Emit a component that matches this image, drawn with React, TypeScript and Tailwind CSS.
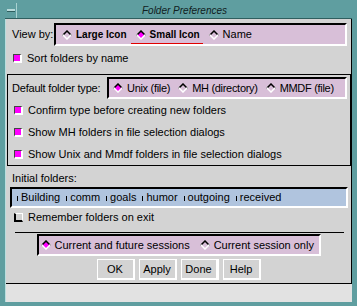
import React from "react";

type Opt = { label: string; bold?: boolean };

function Diamond({ on }: { on: boolean }) {
  return (
    <svg width="10" height="10" viewBox="0 0 10 10" className="shrink-0">
      <polygon points="5,1 9,5 5,9 1,5" fill={on ? "#ff00ff" : "none"} />
      <path d="M1 5 L5 1 L9 5" stroke="#000" strokeWidth="1.5" fill="none" strokeLinecap="square" />
      <path d="M1 5 L5 9 L9 5" stroke="#fff" strokeWidth="1.5" fill="none" strokeLinecap="square" />
    </svg>
  );
}

function Check({ on }: { on: boolean }) {
  if (on)
    return (
      <span className="block w-[9px] h-[9px] shrink-0 bg-[#ff00ff] border-t border-l border-[#444] border-r-2 border-b-2 border-r-white border-b-white" />
    );
  return (
    <span className="block w-[9px] h-[9px] shrink-0 bg-[#d3d3d3] border-l-2 border-b-2 border-black border-t border-r border-t-white border-r-white" />
  );
}

function RadioBox({
  options,
  selected,
  focus,
  pl,
  gap,
  className,
}: {
  options: Opt[];
  selected: number;
  focus?: number;
  pl: string;
  gap: string;
  className: string;
}) {
  return (
    <div
      className={`flex items-center bg-[#d8bfd8] border-t-2 border-l-2 border-black border-b-2 border-r-2 border-b-white border-r-white ${pl} ${gap} ${className}`}
    >
      {options.map((o, i) => (
        <span key={o.label} className="relative flex items-center gap-[4px]">
          <Diamond on={i === selected} />
          <span className={o.bold ? "font-bold text-[10px]" : ""}>{o.label}</span>
          {focus === i && (
            <span className="absolute left-[-5px] right-[-3px] top-[13px] h-[1px] bg-[#e00000]" />
          )}
        </span>
      ))}
    </div>
  );
}

function CheckRow({ on, label, className }: { on: boolean; label: string; className: string }) {
  return (
    <div className={`flex items-center gap-[5px] ${className}`}>
      <Check on={on} />
      <span>{label}</span>
    </div>
  );
}

const folders = ["Building", "comm", "goals", "humor", "outgoing", "received"];

export default function App() {
  return (
    <div className="w-[357px] h-[306px] bg-[#5f9ea0] flex flex-col pt-[3px] px-[5px] pb-[4px] text-black text-[11px] leading-none whitespace-nowrap font-['Liberation_Sans',Arial,sans-serif]">
      <div className="h-[16px] flex border-b border-[#2f5f5f]">
        <div className="w-[12px] border-r border-[#a9d2d2] flex items-center justify-center">
          <span className="block w-[8px] h-[3px] bg-[#b8dada] border-b border-[#2f5f5f]" />
        </div>
        <div className="flex-1 flex items-center justify-center italic text-[10px] text-[#102020]">
          Folder Preferences
        </div>
      </div>

      <div className="flex-1 flex flex-col bg-[#e2e2e2] border-l border-[#b8dede]">
        <div className="h-[265px] flex flex-col bg-[#d3d3d3] border-r border-b border-black">
          <div className="flex items-center h-[23px] mt-[4px] pl-[6px] pr-[4px]">
            <span className="w-[42px]">View by:</span>
            <RadioBox
              className="flex-1 h-[23px]"
              pl="pl-[6px]"
              gap="gap-[9px]"
              selected={1}
              focus={1}
              options={[
                { label: "Large Icon", bold: true },
                { label: "Small Icon", bold: true },
                { label: "Name" },
              ]}
            />
          </div>

          <CheckRow on className="h-[13px] mt-[6px] pl-[7px]" label="Sort folders by name" />

          <div className="mt-[9px] ml-[1px] border border-black flex flex-col pt-[2px]">
            <div className="flex items-center h-[22px] pl-[4px] pr-[3px]">
              <span className="w-[95px] tracking-[-0.2px]">Default folder type:</span>
              <RadioBox
                className="flex-1 h-[22px] tracking-[-0.3px] overflow-hidden"
                pl="pl-[4px]"
                gap="gap-[8px]"
                selected={0}
                options={[{ label: "Unix (file)" }, { label: "MH (directory)" }, { label: "MMDF (file)" }]}
              />
            </div>
            <CheckRow on className="h-[22px] pl-[6px]" label="Confirm type before creating new folders" />
            <CheckRow on className="h-[22px] pl-[6px]" label="Show MH folders in file selection dialogs" />
            <CheckRow on className="h-[22px] pl-[6px]" label="Show Unix and Mmdf folders in file selection dialogs" />
          </div>

          <div className="h-[14px] mt-[5px] pl-[6px] flex items-center">Initial folders:</div>

          <div className="h-[21px] mt-[2px] ml-[4px] mr-[3px] flex items-center pl-[5px] bg-[#b0c4de] border-t-2 border-l-2 border-black border-b-2 border-r-2 border-b-white border-r-white">
            {folders.map((f) => (
              <span key={f} className="flex items-center mr-[6px]">
                <span className="block w-[1px] h-[5px] bg-black mr-[3px] mt-[2px]" />
                {f}
              </span>
            ))}
          </div>

          <CheckRow on={false} className="h-[13px] mt-[3px] pl-[8px]" label="Remember folders on exit" />

          <div className="h-[1px] mt-[8px] ml-[9px] mr-[7px] bg-black" />

          <RadioBox
            className="self-center w-[284px] h-[22px] mt-[1px]"
            pl="pl-[2px]"
            gap="gap-[10px]"
            selected={0}
            options={[{ label: "Current and future sessions" }, { label: "Current session only" }]}
          />

          <div className="flex justify-center gap-[4px] mt-[3px]">
            {["OK", "Apply", "Done", "Help"].map((b) => (
              <button
                key={b}
                className={`w-[38px] h-[21px] flex items-center justify-center bg-[#d3d3d3] border-t border-l border-white border-b-2 border-black ${
                  b === "Done" ? "border-r-[3px]" : "border-r-2"
                }`}
              >
                {b}
              </button>
            ))}
          </div>
        </div>
      </div>
    </div>
  );
}
